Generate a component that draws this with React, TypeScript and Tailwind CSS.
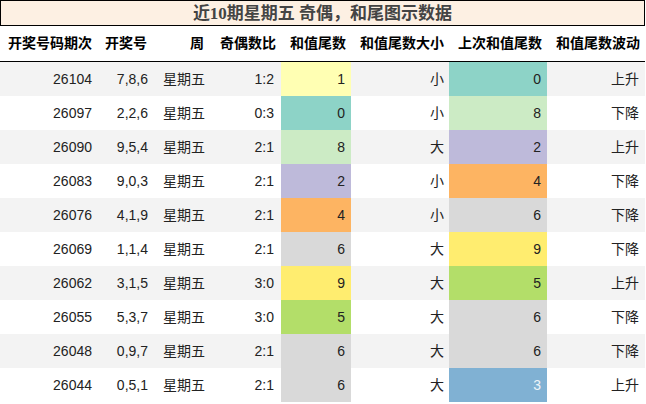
import React from "react";

interface Row {
  issue: string;
  nums: string;
  day: string;
  ratio: string;
  tail: number;
  size: string;
  prevTail: number;
  trend: string;
}

const rows: Row[] = [
  { issue: "26104", nums: "7,8,6", day: "星期五", ratio: "1:2", tail: 1, size: "小", prevTail: 0, trend: "上升" },
  { issue: "26097", nums: "2,2,6", day: "星期五", ratio: "0:3", tail: 0, size: "小", prevTail: 8, trend: "下降" },
  { issue: "26090", nums: "9,5,4", day: "星期五", ratio: "2:1", tail: 8, size: "大", prevTail: 2, trend: "上升" },
  { issue: "26083", nums: "9,0,3", day: "星期五", ratio: "2:1", tail: 2, size: "小", prevTail: 4, trend: "下降" },
  { issue: "26076", nums: "4,1,9", day: "星期五", ratio: "2:1", tail: 4, size: "小", prevTail: 6, trend: "下降" },
  { issue: "26069", nums: "1,1,4", day: "星期五", ratio: "2:1", tail: 6, size: "大", prevTail: 9, trend: "下降" },
  { issue: "26062", nums: "3,1,5", day: "星期五", ratio: "3:0", tail: 9, size: "大", prevTail: 5, trend: "上升" },
  { issue: "26055", nums: "5,3,7", day: "星期五", ratio: "3:0", tail: 5, size: "大", prevTail: 6, trend: "下降" },
  { issue: "26048", nums: "0,9,7", day: "星期五", ratio: "2:1", tail: 6, size: "大", prevTail: 6, trend: "下降" },
  { issue: "26044", nums: "0,5,1", day: "星期五", ratio: "2:1", tail: 6, size: "大", prevTail: 3, trend: "上升" },
];

// digit -> cell colour (Set3 palette)
const tailColors: Record<number, string> = {
  0: "bg-[#8dd3c7] text-[#222]",
  1: "bg-[#ffffb3] text-[#222]",
  2: "bg-[#bebada] text-[#222]",
  3: "bg-[#80b1d3] text-[#eef4f8]",
  4: "bg-[#fdb462] text-[#222]",
  5: "bg-[#b3de69] text-[#222]",
  6: "bg-[#d9d9d9] text-[#222]",
  7: "bg-[#fccde5] text-[#222]",
  8: "bg-[#ccebc5] text-[#222]",
  9: "bg-[#ffed6f] text-[#222]",
};

const headers = ["开奖号码期次", "开奖号", "周", "奇偶数比", "和值尾数", "和值尾数大小", "上次和值尾数", "和值尾数波动"];

const grid = "grid grid-cols-[97px_55px_57px_72px_70px_98px_98px_98px]";

export default function App() {
  return (
    <div
      className="w-[645px] bg-white text-[#222]"
      style={{ fontFamily: '"Liberation Sans", "Noto Sans CJK SC", sans-serif' }}
    >
      <div className="h-[26px] border border-black bg-[#fdf0e3] flex items-center justify-center">
        <span
          className="text-[17px] font-bold text-[#444] leading-none"
          style={{ fontFamily: '"Liberation Serif", "Noto Sans CJK SC", serif' }}
        >
          近10期星期五 奇偶，和尾图示数据
        </span>
      </div>

      <div className={`${grid} h-[36px] border-b border-black text-[14px] font-bold text-black`}>
        {headers.map((h) => (
          <div key={h} className="flex items-center justify-end pr-[5px] whitespace-nowrap">
            {h}
          </div>
        ))}
      </div>

      {rows.map((r, i) => (
        <div key={r.issue} className={`${grid} h-[34px] text-[14px] ${i % 2 === 0 ? "bg-[#f3f3f3]" : "bg-white"}`}>
          <div className="flex items-center justify-end pr-[5px]">{r.issue}</div>
          <div className="flex items-center justify-end pr-[4px]">{r.nums}</div>
          <div className="flex items-center pl-[11px]">{r.day}</div>
          <div className="flex items-center justify-end pr-[7px]">{r.ratio}</div>
          <div className={`flex items-center justify-end pr-[6px] ${tailColors[r.tail]}`}>{r.tail}</div>
          <div className="flex items-center justify-end pr-[5px]">{r.size}</div>
          <div className={`flex items-center justify-end pr-[6px] ${tailColors[r.prevTail]}`}>{r.prevTail}</div>
          <div className="flex items-center justify-end pr-[6px]">{r.trend}</div>
        </div>
      ))}
    </div>
  );
}
